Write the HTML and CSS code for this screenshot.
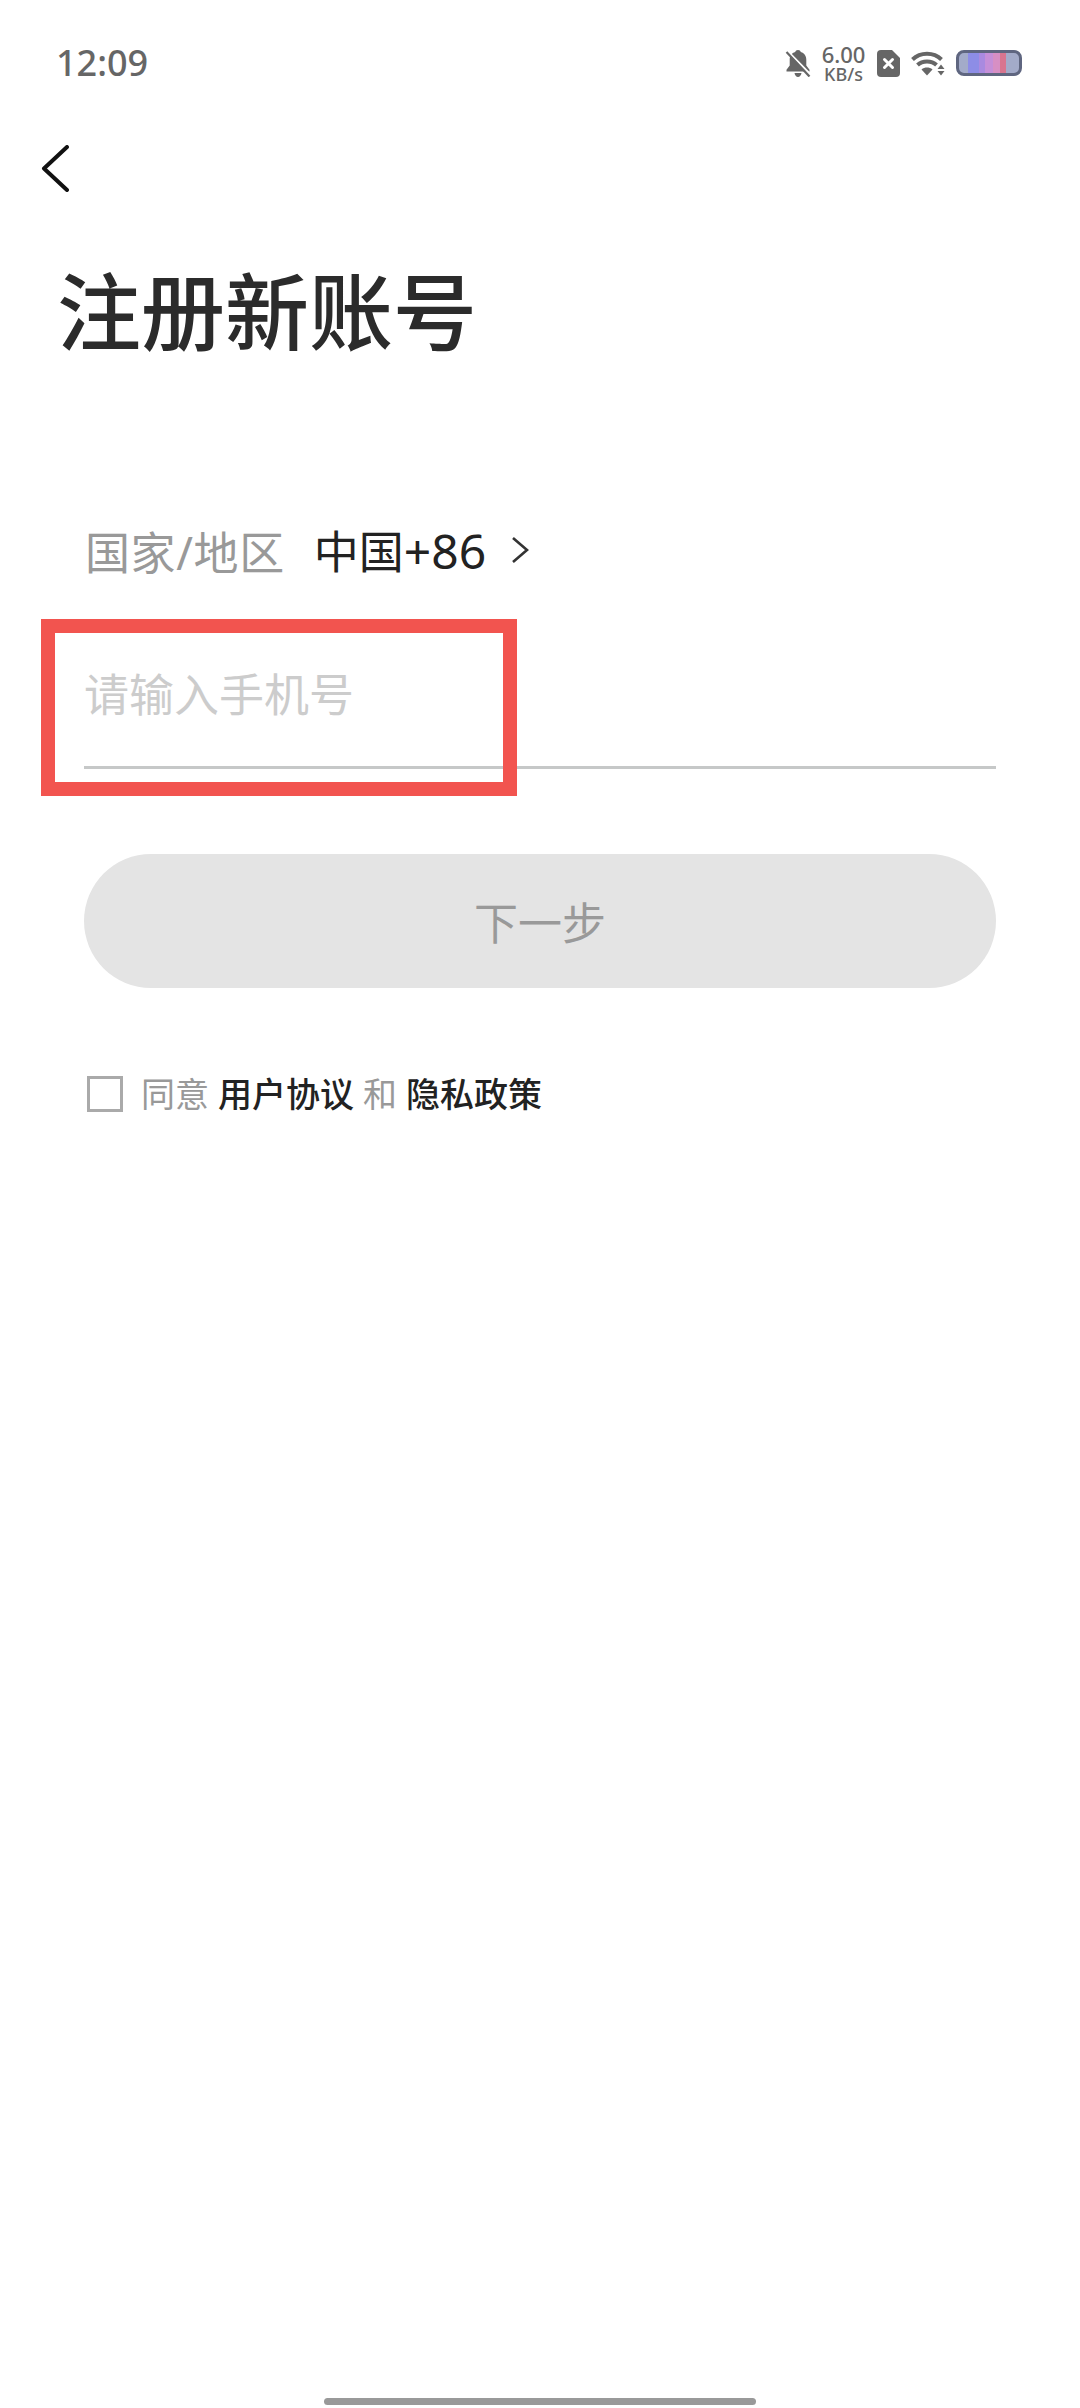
FILE: index.html
```html
<!DOCTYPE html>
<html lang="zh-CN">
<head>
  <meta charset="UTF-8">
  <title>注册新账号</title>
  <link rel="stylesheet" href="styles.css">
</head>
<body>

<div class="page">
  <header class="statusbar">
    <span class="clock">12:09</span>
    <div class="status-icons">
      <svg class="icon-bell" viewBox="0 0 26 27" width="26" height="27">
        <path d="M13 0c1.500 0 2.500.9 2.800 2.100 3.500 1 5.500 4 5.500 7.700v5.700l3.200 4.300v1.700H1.500v-1.700l3.200-4.300V9.800c0-3.700 2-6.700 5.500-7.700C10.500.9 11.500 0 13 0zM9.500 23h7c-.3 2.200-1.700 4-3.500 4s-3.200-1.800-3.500-4z" fill="#666"/>
        <path d="M3 1.500 26 25" stroke="#fff" stroke-width="2"/>
        <path d="M1.500 2 24.500 26.500" stroke="#666" stroke-width="2.200"/>
      </svg>
      <div class="netspeed">
        <span class="netspeed-value">6.00</span>
        <span class="netspeed-unit">KB/s</span>
      </div>
      <svg class="icon-sim" viewBox="0 0 23 27" width="23" height="27">
        <path d="M4 0h11l8 8v15a4 4 0 0 1-4 4H4a4 4 0 0 1-4-4V4a4 4 0 0 1 4-4z" fill="#666"/>
        <path d="M7.500 9.500l8 8M15.500 9.500l-8 8" stroke="#fff" stroke-width="3" stroke-linecap="round"/>
      </svg>
      <svg class="icon-wifi" viewBox="0 0 34 26" width="34" height="26">
        <path d="M1.500 9.500C9.500 1.800 22.500 1.800 30.500 9.500" fill="none" stroke="#666" stroke-width="4"/>
        <path d="M6.500 15C11.500 10.300 20.500 10.300 25.500 15" fill="none" stroke="#666" stroke-width="4"/>
        <path d="M10.500 19.500c3.200-2.600 7.800-2.600 11 0l-5.500 6z" fill="#666"/>
        <path d="M30 14.500l3.500 4.500h-7zM26.500 21h7L30 25.500z" fill="#666"/>
      </svg>
      <div class="battery"><div class="battery-fill"></div></div>
    </div>
  </header>

  <div class="toolbar">
    <svg class="back" viewBox="0 0 28 47" width="28" height="47">
      <path d="M26 2 3 23.500 26 45" fill="none" stroke="#111" stroke-width="4" stroke-linecap="round" stroke-linejoin="round"/>
    </svg>
  </div>

  <h1 class="title">注册新账号</h1>

  <main class="form">
    <div class="region-row">
      <span class="region-label">国家/地区</span>
      <span class="region-value">中国<span class="region-code">+86</span></span>
      <svg class="region-arrow" viewBox="0 0 18 28" width="18" height="28">
        <path d="M2 2l14 12L2 26" fill="none" stroke="#333" stroke-width="2.600"/>
      </svg>
    </div>

    <div class="phone-field">请输入手机号</div>

    <button class="next-btn">下一步</button>

    <div class="agree-row">
      <span class="checkbox"></span>
      <span class="agree-text">同意</span>
      <span class="agree-link">用户协议</span>
      <span class="agree-text">和</span>
      <span class="agree-link">隐私政策</span>
    </div>
  </main>

  <div class="home-bar"></div>

  <!-- annotation drawn over the phone field -->
  <div class="highlight"></div>
</div>

</body>
</html>
```

FILE: styles.css
```css
html, body { margin: 0; padding: 0; background: #fff; }
body { font-family: "Noto Sans", "Noto Sans CJK SC", sans-serif; color: #222; }
.page { position: relative; width: 1080px; height: 2408px; display: flex; flex-direction: column; overflow: hidden; }

.statusbar { height: 126px; box-sizing: border-box; padding: 0 58px 0 56px; display: flex; justify-content: space-between; align-items: center; }
.clock { font-size: 36px; font-weight: 500; color: #666; line-height: 1; }
.status-icons { display: flex; align-items: center; }
.icon-bell { margin-right: 10px; }
.netspeed { width: 45px; display: flex; flex-direction: column; align-items: center; color: #666; font-weight: 500; margin-right: 11px; }
.netspeed-value { font-size: 22px; line-height: 22px; }
.netspeed-unit { font-size: 18px; line-height: 18px; }
.icon-sim { margin-right: 11px; }
.icon-wifi { margin-right: 11px; }
.battery { width: 66px; height: 26px; box-sizing: border-box; border: 3px solid #5f6680; border-radius: 8px; background: #a3abc9; overflow: hidden; }
.battery-fill { width: 38px; height: 100%; margin-left: 9px; background: linear-gradient(90deg, #8d8de6 0, #8d8de6 30%, #a98ae0 30%, #a98ae0 45%, #c58fd8 45%, #c58fd8 65%, #d78fc4 65%, #d78fc4 85%, #d8758f 85%, #d8758f 100%); }

.toolbar { height: 47px; padding: 19px 0 0 41px; }
.back { display: block; }

.title { margin: 70px 0 0 57px; font-size: 84px; line-height: 100px; font-weight: 500; color: #2b2b2b; }

.form { padding: 0 84px; margin-top: 158px; display: flex; flex-direction: column; }

.region-row { display: flex; align-items: center; height: 60px; font-size: 45px; }
.region-label { color: #999; margin-left: 1px; letter-spacing: .6px; }
.region-value { color: #222; margin-left: 29px; }
.region-code { font-size: 48px; }
.region-arrow { margin-left: 25px; }

.phone-field { margin-top: 81px; height: 108px; padding-top: 2px; box-sizing: border-box; border-bottom: 3px solid #c6c8c8; font-size: 45px; line-height: 64px; color: #ccc; }

.next-btn { margin-top: 85px; height: 134px; width: 100%; border: 0; border-radius: 67px; background: #e4e4e4; color: #999; font-family: inherit; font-size: 44px; padding: 0; }

.agree-row { margin-top: 88px; display: flex; align-items: center; font-size: 34px; line-height: 36px; padding-left: 3px; }
.checkbox { width: 36px; height: 36px; box-sizing: border-box; border: 3px solid #aaa; margin-right: 18px; }
.agree-text { color: #999; }
.agree-link { color: #222; margin: 0 9px; font-weight: 500; }

.home-bar { position: absolute; left: 324px; bottom: 3px; width: 432px; height: 7px; border-radius: 4px; background: #999; }

.highlight { position: absolute; left: 41px; top: 619px; width: 476px; height: 177px; box-sizing: border-box; border: 14px solid #f2544f; }
```
